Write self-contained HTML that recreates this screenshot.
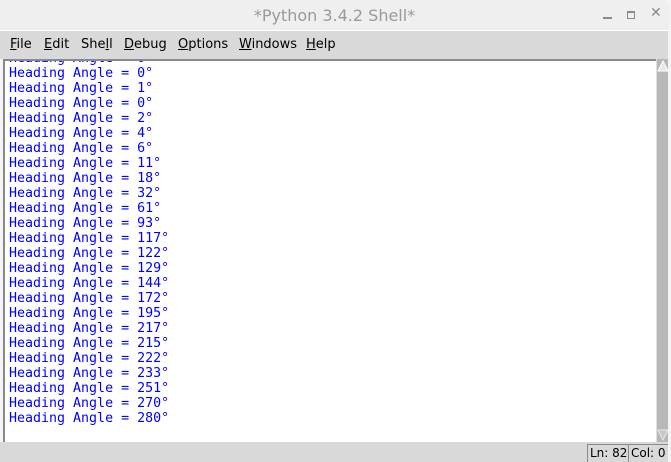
<!DOCTYPE html>
<html><head><style>
*{margin:0;padding:0;box-sizing:border-box}
body{width:671px;height:462px;overflow:hidden;background:#f4f4f4;position:relative;font-family:"DejaVu Sans","Liberation Sans",sans-serif}
#title{position:absolute;left:0;top:0;width:669px;height:31px;background:#efefef;border-top-right-radius:6px;border-bottom:1px solid #fff}
#title .t{position:absolute;left:0;width:669px;top:6px;text-align:center;font-size:16px;color:#9a9a9a}
#menu{position:absolute;left:0;top:31px;width:668px;height:28px;background:#d9d9d9;font-size:13px;color:#000}
#menu span{position:absolute;top:6px}
#menu u{text-decoration:underline}
#text{position:absolute;left:3px;top:59px;width:653px;height:383px;background:#fff;border-top:2px solid #8a8a8a;border-left:2px solid #8a8a8a;overflow:hidden}
#text pre{position:absolute;left:4px;top:-10px;font-family:"DejaVu Sans Mono","Liberation Mono",monospace;font-size:13.3px;line-height:15px;color:#0000ff}
#sb{position:absolute;left:656px;top:59px;width:12px;height:383px;background:#b8b8b8;border-left:1px solid #e0e0e0}
#status{position:absolute;left:0;top:442px;width:668px;height:20px;background:#d9d9d9;font-size:12px;white-space:nowrap}
#status span{position:absolute;top:2px;height:18px;border-left:1px solid #8a8a8a;border-top:1px solid #8a8a8a;padding:1px 2px}
</style></head><body>
<div id="title"><div class="t">*Python 3.4.2 Shell*</div>
<div style="position:absolute;left:603px;top:17px;width:9px;height:2px;background:#8a8a8a"></div>
<div style="position:absolute;left:627px;top:11px;width:8px;height:8px;border:1.5px solid #8a8a8a;border-top-width:2px"></div>
<div style="position:absolute;left:650px;top:5px;font-size:14px;color:#8a8a8a;font-weight:bold">✕</div>
</div>
<div id="menu">
<span style="left:10px"><u>F</u>ile</span>
<span style="left:44px"><u>E</u>dit</span>
<span style="left:81px">She<u>l</u>l</span>
<span style="left:124px"><u>D</u>ebug</span>
<span style="left:178px"><u>O</u>ptions</span>
<span style="left:239px"><u>W</u>indows</span>
<span style="left:306px"><u>H</u>elp</span>
</div>
<div id="text"><pre>Heading Angle = 0°
Heading Angle = 0°
Heading Angle = 1°
Heading Angle = 0°
Heading Angle = 2°
Heading Angle = 4°
Heading Angle = 6°
Heading Angle = 11°
Heading Angle = 18°
Heading Angle = 32°
Heading Angle = 61°
Heading Angle = 93°
Heading Angle = 117°
Heading Angle = 122°
Heading Angle = 129°
Heading Angle = 144°
Heading Angle = 172°
Heading Angle = 195°
Heading Angle = 217°
Heading Angle = 215°
Heading Angle = 222°
Heading Angle = 233°
Heading Angle = 251°
Heading Angle = 270°
Heading Angle = 280°</pre></div>
<div id="sb">
<svg width="12" height="383" style="position:absolute;left:0;top:0">
<polygon points="1,12 6,2 11,12" fill="#e8e8e8" stroke="#fff" stroke-width="1"/>
<polygon points="1,371 6,381 11,371" fill="#c8c8c8" stroke="#e8e8e8" stroke-width="1"/>
</svg></div>
<div id="status">
<span style="left:587px">Ln: 82</span>
<span style="left:628px">Col: 0</span>
</div>
</body></html>
